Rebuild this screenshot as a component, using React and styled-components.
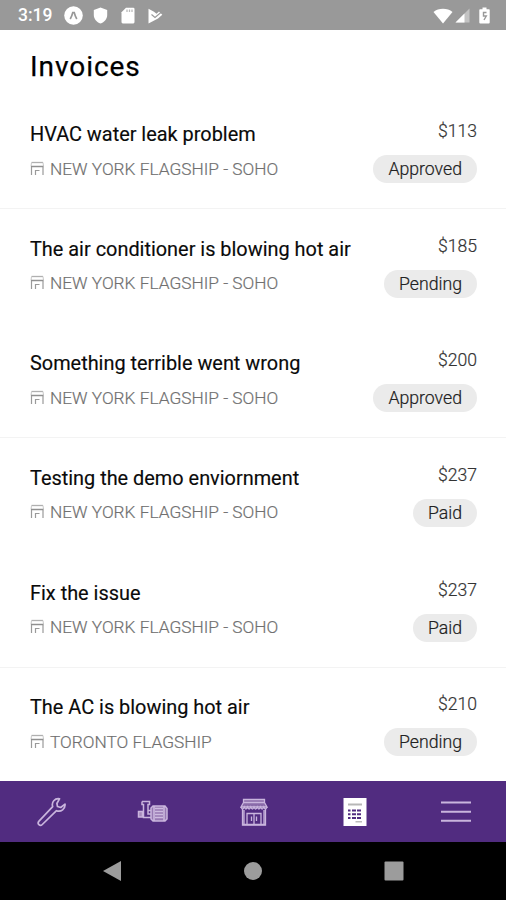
import React from "react";
import styled, { createGlobalStyle } from "styled-components";

const GlobalStyle = createGlobalStyle`
  * {
    box-sizing: border-box;
  }
  body {
    margin: 0;
    background: #fff;
    font-family: Roboto, "Liberation Sans", sans-serif;
  }
`;

const Screen = styled.div`
  width: 506px;
  height: 900px;
  display: flex;
  flex-direction: column;
  overflow: hidden;
  background: #fff;
`;

const StatusBar = styled.header`
  flex: none;
  height: 30px;
  padding: 1px 16px 0 18px;
  display: flex;
  justify-content: space-between;
  background: #999;
  color: #fff;
`;

const StatusGroup = styled.div`
  display: flex;
  align-items: center;
`;

const Clock = styled.span`
  width: 46px;
  font-size: 17.5px;
  font-weight: 500;
  line-height: 29px;
`;

const Icon = styled.svg`
  display: block;
  flex: none;
  margin-left: ${(p) => p.$gap || 0}px;
`;

const Heading = styled.h1`
  flex: none;
  height: 64.5px;
  margin: 0;
  padding: 20px 30px 0;
  font-size: 28px;
  font-weight: 400;
  line-height: 34px;
  letter-spacing: 0.95px;
  color: #000;
  -webkit-text-stroke: 0.25px #000;
`;

const List = styled.main`
  flex: 1;
  overflow: hidden;
`;

const Row = styled.section`
  height: 114.65px;
  padding: 23.5px 29px 0 30px;
  display: flex;
  justify-content: space-between;
  border-bottom: 1px solid ${(p) => (p.$divider ? "#f3f3f3" : "transparent")};
`;

const Title = styled.h2`
  margin: 0;
  font-size: 19.9px;
  font-weight: 400;
  line-height: 33px;
  color: #0a0a0a;
  -webkit-text-stroke: 0.15px #0a0a0a;
`;

const Location = styled.div`
  display: flex;
  align-items: center;
  gap: 6px;
  height: 35px;
  font-size: 17.3px;
  font-weight: 300;
  color: #707070;
  -webkit-text-stroke: 0.2px #707070;
  white-space: nowrap;
`;

const Side = styled.div`
  display: flex;
  flex-direction: column;
  align-items: flex-end;
`;

const Amount = styled.span`
  height: 37px;
  font-size: 17.6px;
  font-weight: 300;
  line-height: 27px;
  color: #333;
  -webkit-text-stroke: 0.2px #333;
`;

const Badge = styled.span`
  height: 28px;
  padding: 0 15px;
  border-radius: 14px;
  background: #ebebeb;
  font-size: 17.7px;
  font-weight: 300;
  line-height: 28px;
  color: #222;
  -webkit-text-stroke: 0.2px #222;
`;

const TabBar = styled.nav`
  flex: none;
  height: 61px;
  padding-left: 1px;
  display: grid;
  grid-template-columns: repeat(5, 1fr);
  place-items: center;
  background: #512c80;
  color: #c9b5dd;
`;

const SystemBar = styled.footer`
  flex: none;
  height: 58px;
  padding: 0 102px;
  display: flex;
  align-items: center;
  justify-content: space-between;
  background: #000;
  color: #9c9c9c;
`;

const invoices = [
  { title: "HVAC water leak problem", place: "NEW YORK FLAGSHIP - SOHO", amount: "$113", status: "Approved", divider: true },
  { title: "The air conditioner is blowing hot air", place: "NEW YORK FLAGSHIP - SOHO", amount: "$185", status: "Pending" },
  { title: "Something terrible went wrong", place: "NEW YORK FLAGSHIP - SOHO", amount: "$200", status: "Approved", divider: true },
  { title: "Testing the demo enviornment", place: "NEW YORK FLAGSHIP - SOHO", amount: "$237", status: "Paid" },
  { title: "Fix the issue", place: "NEW YORK FLAGSHIP - SOHO", amount: "$237", status: "Paid", divider: true },
  { title: "The AC is blowing hot air", place: "TORONTO FLAGSHIP", amount: "$210", status: "Pending" },
];

const ShopIcon = () => (
  <Icon width="14" height="16" viewBox="0 0 14 16" fill="none">
    <path d="M1.500 1.500h11.500" stroke="#b0b0b0" strokeWidth="1.300" />
    <path d="M1.500 1.500L1 5.500M13 1.500l.5 4" stroke="#c8c8c8" />
    <path d="M1 5.500h12.500" stroke="#909090" strokeWidth="1.500" />
    <path d="M1.500 6v8M13 6v8M5.500 14V9.500h4" stroke="#9a9a9a" strokeWidth="1.200" />
  </Icon>
);

const StatusIcons = () => (
  <>
    <Icon width="19" height="19" viewBox="0 0 19 19">
      <circle cx="9.5" cy="9.5" r="9.3" fill="#fff" />
      <path d="M6.200 13q1.700-3 2.600-6.500h1.400q.9 3.500 2.600 6.500" fill="none" stroke="#999" strokeWidth="1.700" />
    </Icon>
    <Icon $gap={10} width="15" height="17" viewBox="0 0 15 17">
      <path d="M7.500.5l6.700 2.600V8c0 4-2.800 7.200-6.700 8.500C3.600 15.200.8 12 .8 8V3.100z" fill="#fff" />
    </Icon>
    <Icon $gap={13} width="14" height="17" viewBox="0 0 14 17">
      <path d="M5 .7h7.300q1.200 0 1.200 1.200v13.200q0 1.300-1.200 1.300H1.800q-1.300 0-1.300-1.300V5.200z" fill="#fff" />
      <path d="M6 2.500v2.500M8.500 2.500v2.500M11 2.500v2.500" stroke="#bbb" strokeWidth="1.300" />
    </Icon>
    <Icon $gap={13} width="15" height="16" viewBox="0 0 15 16">
      <path d="M.5.8L6 3.800l2.500 2L11 3.500l3.300 3.300L10 10.500.5 15.500z" fill="#fff" />
      <path d="M3.500 6.500l3.500 3 6.500-5.500" fill="none" stroke="#999" strokeWidth="1.100" />
    </Icon>
  </>
);

const SignalIcons = () => (
  <>
    <Icon width="20" height="16" viewBox="0 0 20 16">
      <path d="M.5 4C5.500-.2 14.500-.2 19.500 4L10 15.500z" fill="#fff" />
    </Icon>
    <Icon $gap={2} width="15" height="15" viewBox="0 0 15 15">
      <path d="M14.500.5v14H.5z" fill="#c3c3c3" />
      <path d="M9.500 5.500v9H.5z" fill="#fff" />
    </Icon>
    <Icon $gap={9} width="11" height="17" viewBox="0 0 11 17">
      <path d="M3.500.5h4v1.700H10q.7 0 .7.800v12.500q0 1-1 1H1.300q-1 0-1-1V3q0-.8.8-.8h2.400z" fill="#fff" />
      <path d="M7.500 5.500H4.500v3.500h2.800L5 13" fill="none" stroke="#999" strokeWidth="1.400" />
    </Icon>
  </>
);

const Tabs = () => (
  <>
    <Icon width="30" height="30" viewBox="0 0 30 30" fill="none" stroke="currentColor" strokeWidth="1.700" strokeLinejoin="round">
      <path d="M22.500 1.800c-4.700-.8-8.300 3.500-6.800 7.800L2 24.200c-2.300 2.500 1 5.600 3.300 3.300L19.500 13.700c4.500 1.700 9-1.800 8.500-6.500l-4.300 3.300-3.200-1-.6-3z" />
    </Icon>
    <Icon width="32" height="26" viewBox="0 0 32 26" fill="none" stroke="currentColor" strokeWidth="1.500">
      <path d="M5 2.500h7.500v3H11v9.500h3.500M5 2.500v3h1.500v13h8M11 11.500h3.500" />
      <path d="M1.500 12.500h4v5.500h-4z" fill="#a58abb" />
      <path d="M16 7h12l2 2.500v10.500L28 22H16l-2-2V9z" fill="#9779b3" />
      <path d="M18 9.500h8M18 12.500h8M18 15.500h8M18 18.500h8M17 7v15M27 7v15" stroke="#cdbbe0" />
    </Icon>
    <Icon width="28" height="28" viewBox="0 0 28 28" fill="none" stroke="currentColor" strokeWidth="1.300">
      <path d="M3.500 1.500h21v3h-21zM3.500 4.500L1 9h26l-2.500-4.500" fill="#8a6ba9" />
      <path d="M1 9q1.600 4 3.300 0 1.600 4 3.200 0 1.600 4 3.300 0 1.600 4 3.200 0 1.600 4 3.300 0 1.600 4 3.200 0 1.600 4 3.300 0 1.600 4 3.200 0" />
      <path d="M2.500 11v16h23V11M4 12v14M24 12v14" />
      <path d="M7 26V15.500h14V26M14 15.500V26M11.500 18.500v4.500M16.500 18.500v4.500M2.500 26.500h23" />
    </Icon>
    <Icon width="24" height="30" viewBox="0 0 24 30">
      <path d="M.5 1h23v28H.5z" fill="#fff" />
      <path d="M5 7.500h14" stroke="#b7b7b7" strokeWidth="2" />
      <path d="M5 13.500h14M5 17.200h14M5 21h14" stroke="#512c80" strokeWidth="1.900" strokeDasharray="2.500 1.500 4 1 4 1" />
      <path d="M12.500 24.800H19" stroke="#aaa" strokeWidth="1.200" />
    </Icon>
    <Icon width="30" height="24" viewBox="0 0 30 24">
      <path d="M0 2.500h30M0 11.700h30M0 20.800h30" stroke="#c9b5dd" strokeWidth="2" />
    </Icon>
  </>
);

const App = () => {
  return (
    <Screen>
      <GlobalStyle />
      <StatusBar>
        <StatusGroup>
          <Clock>3:19</Clock>
          <StatusIcons />
        </StatusGroup>
        <StatusGroup>
          <SignalIcons />
        </StatusGroup>
      </StatusBar>

      <Heading>Invoices</Heading>

      <List>
        {invoices.map((invoice, id) => (
          <Row key={`invoice-${id}`} $divider={invoice.divider}>
            <div>
              <Title>{invoice.title}</Title>
              <Location>
                <ShopIcon />
                {invoice.place}
              </Location>
            </div>
            <Side>
              <Amount>{invoice.amount}</Amount>
              <Badge>{invoice.status}</Badge>
            </Side>
          </Row>
        ))}
      </List>

      <TabBar>
        <Tabs />
      </TabBar>

      {/* Android back / home / recents */}
      <SystemBar>
        <Icon width="20" height="22" viewBox="0 0 20 22">
          <path d="M1 11L19 1v20z" fill="currentColor" />
        </Icon>
        <Icon width="20" height="20" viewBox="0 0 20 20">
          <circle cx="10" cy="10" r="9" fill="currentColor" />
        </Icon>
        <Icon width="20" height="20" viewBox="0 0 20 20">
          <rect x=".5" y=".5" width="19" height="19" rx="1" fill="currentColor" />
        </Icon>
      </SystemBar>
    </Screen>
  );
};

export default App;
